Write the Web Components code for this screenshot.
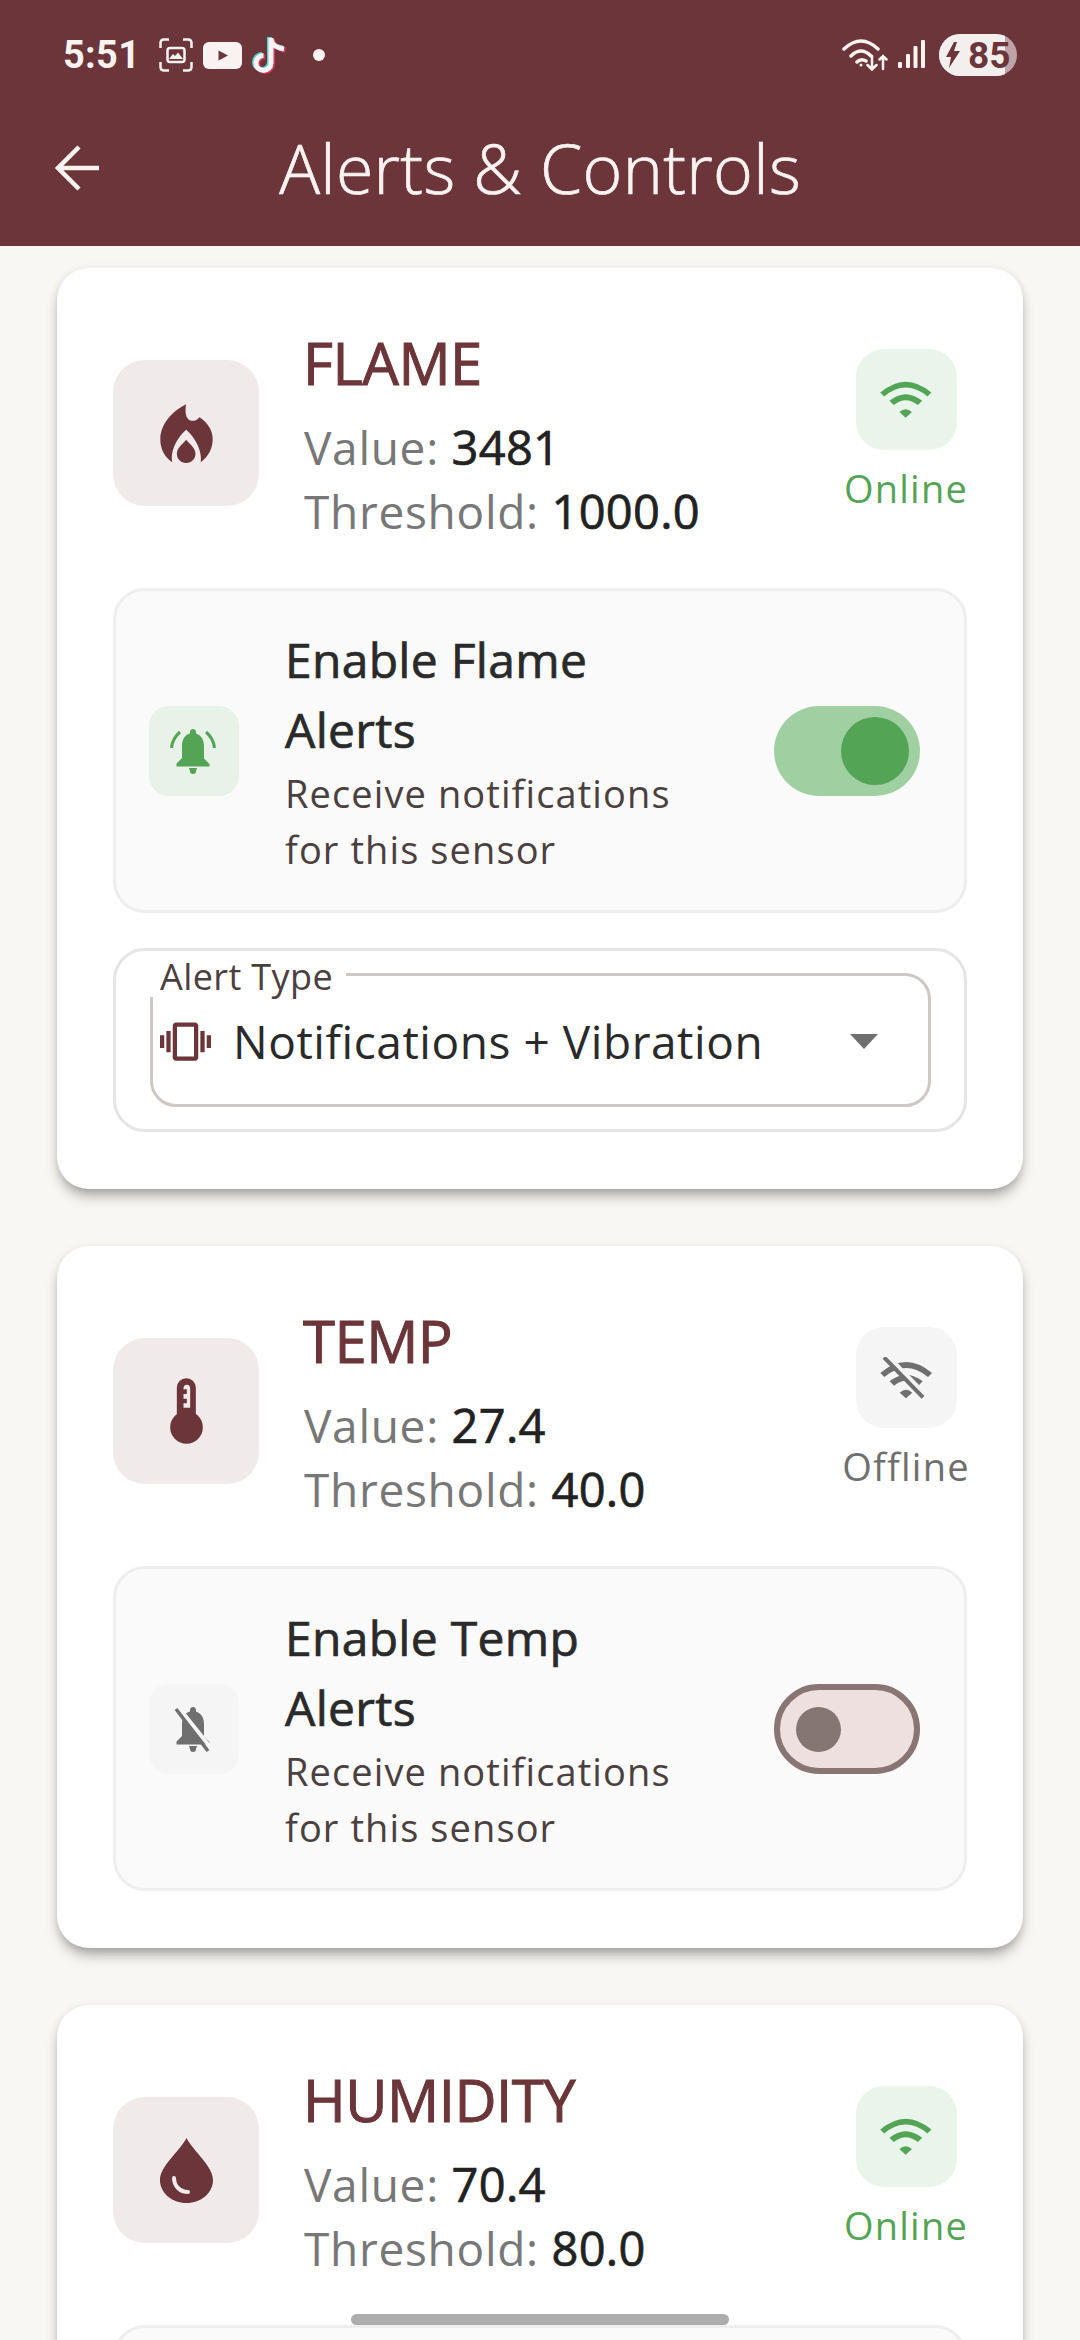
<!DOCTYPE html>
<html>
<head>
<meta charset="utf-8">
<title>Alerts &amp; Controls</title>
<style>
  html, body { margin: 0; padding: 0; background: #F8F7F3; }
  html { height: 2340px; overflow: hidden; }
  body { width: 1080px; height: 2340px; overflow: hidden; position: relative; font-family: "Open Sans", sans-serif; }
  main { display: flex; flex-direction: column; gap: 57px; height: 2094px; box-sizing: border-box; padding: 22px 57px 0; overflow: hidden; }
  sensor-card { flex: none; }
</style>
</head>
<body>
<status-bar></status-bar>
<app-bar title-text="Alerts &amp; Controls"></app-bar>
<main>
  <sensor-card name="FLAME" icon="flame" value="3481" threshold="1000.0" online enabled alert-label="Enable Flame Alerts">
    <alert-select label="Alert Type" value="Notifications + Vibration"></alert-select>
  </sensor-card>
  <sensor-card name="TEMP" icon="temp" value="27.4" threshold="40.0" alert-label="Enable Temp Alerts"></sensor-card>
  <sensor-card name="HUMIDITY" icon="humidity" value="70.4" threshold="80.0" online></sensor-card>
</main>
<home-indicator></home-indicator>

<script>
// Shared icon markup, drawn from measurements of the reference
const WIFI_ARCS = `
  <path d="M300 220Q377 154 455 220L443 232Q377 178 312 232Z"/>
  <path d="M328 245Q377 205 427 245L414 258Q377 228 341 258Z"/>
  <path d="M358 279Q377 262 396 279L377 296Z"/>`;

const BELL = `
  <path d="M24 3c2 0 3 1.5 3 3v1.500c6 2 8 7 8 13v12l5.500 5.500v2.500H7.500V37.500L13 32V20.500c0-6 2-11.500 8-13V6c0-1.500 1-3 3-3Z"/>
  <path d="M20 42h8l-1 3a3 3 0 0 1-6 0Z"/>`;

const ICONS = {
  flame: `<svg width="53" height="59" viewBox="358 452 158 178" fill="#6B3539">
    <path d="M436 453C436 453 430 480 440 495C448 506 466 506 476 492C500 508 516 530 516 558C516 590 500 612 480 628C484 600 470 560 436 530C402 560 388 600 394 628C372 612 358 590 358 558C358 510 400 470 436 453Z"/>
    <path d="M436 560C450 576 464 586 464 602C464 618 452 630 436 630C420 630 408 618 408 602C408 586 422 576 436 560Z"/>
  </svg>`,
  temp: `<svg width="33" height="66" viewBox="208 236 98 198">
    <circle cx="257" cy="384" r="49" fill="#6B3539"/>
    <rect x="228" y="237" width="57" height="170" rx="28" fill="#6B3539"/>
    <path d="M248 268Q248 256 258 256Q268 256 268 268V325H248V312H258V298H248V284H258V270H248Z" fill="#F0EAEB"/>
  </svg>`,
  humidity: `<svg width="53" height="65" viewBox="0 0 53 65">
    <path d="M26.500 0C34 14 53 28 53 42C53 55 41 65 26.500 65C12 65 0 55 0 42C0 28 19 14 26.500 0Z" fill="#6B3539"/>
    <path d="M14 40C14 48 20 54 28 54" fill="none" stroke="#F0EAEB" stroke-width="4" stroke-linecap="round"/>
  </svg>`,
  wifi: `<svg width="52" height="37" viewBox="300 185 156 112" fill="#53A455">${WIFI_ARCS}</svg>`,
  wifiOff: `<svg width="52" height="42" viewBox="296 164 156 126" fill="#6F6F6F">
    <g transform="translate(-3 -8)">${WIFI_ARCS}</g>
    <path d="M316 157L433 277" stroke="#F5F5F5" stroke-width="12"/>
    <path d="M308 165L425 285" stroke="#6F6F6F" stroke-width="12"/>
  </svg>`,
  bell: `<svg width="50" height="50" viewBox="0 0 50 50" fill="#53A455">${BELL}
    <path d="M11 6C5 11 3 17 2.500 22M37 6C43 11 45 17 45.500 22" fill="none" stroke="#53A455" stroke-width="3"/>
  </svg>`,
  bellOff: `<svg width="50" height="50" viewBox="0 0 50 50" fill="#6F6F6F">${BELL}
    <path d="M10 4L42 44" stroke="#F5F5F5" stroke-width="4"/>
    <path d="M7 5L39 47" stroke="#6F6F6F" stroke-width="3.500"/>
  </svg>`,
  vibration: `<svg width="51" height="51" viewBox="0 0 24 24" fill="#6B3539">
    <path d="M0 15h2V9H0v6zm3 2h2V7H3v10zm19-8v6h2V9h-2zm-3 8h2V7h-2v10zM16.500 3h-9C6.670 3 6 3.670 6 4.500v15c0 .830.670 1.500 1.500 1.500h9c.830 0 1.500-.670 1.500-1.500v-15c0-.830-.670-1.500-1.500-1.500zM16 19H8V5h8v14z"/>
  </svg>`
};

class StatusBar extends HTMLElement {
  connectedCallback() {
    const shadow = this.attachShadow({ mode: 'open' });
    shadow.innerHTML = `
      <style>
        :host { display: flex; align-items: center; height: 110px; padding: 0 63px 0 63px; box-sizing: border-box;
                background: #6B3539; color: #F8F3F0; }
        .time { font: 700 38px Roboto, sans-serif; letter-spacing: .3px; margin-right: 19px; }
        .left { display: flex; align-items: center; gap: 10px; }
        .dot { width: 12px; height: 12px; border-radius: 50%; background: #F8F3F0; margin-left: 16px; }
        .right { margin-left: auto; display: flex; align-items: center; gap: 10px; }
        .battery { position: relative; width: 78px; height: 42px; border-radius: 21px; overflow: hidden; background: #BFA3A5;
                   display: flex; align-items: center; gap: 8px; padding-left: 7px; box-sizing: border-box;
                   font: 700 37px Roboto, sans-serif; color: #6B3539; margin-left: 3px; }
        .battery .fill { position: absolute; left: 0; top: 0; bottom: 0; width: 66px; background: #F3EFEF; }
        .battery svg, .battery .pct { position: relative; flex: none; }
      </style>
      <span class="time">5:51</span>
      <div class="left">
        <svg width="34" height="34" viewBox="0 0 34 34" fill="none" stroke="#F8F3F0" stroke-width="2.500">
          <path d="M1.500 10V5Q1.500 1.500 5 1.500H10M24 1.500H29Q32.500 1.500 32.500 5V10M32.500 24V29Q32.500 32.500 29 32.500H24M10 32.500H5Q1.500 32.500 1.500 29V24"/>
          <rect x="8.500" y="10" width="17" height="14" rx="2.500"/>
          <path d="M10 21L14 16L16 18L19 14.500L24 21Z" fill="#F8F3F0" stroke="none"/>
        </svg>
        <svg width="39" height="27" viewBox="0 0 39 27">
          <rect width="39" height="27" rx="6" fill="#F8F3F0"/>
          <path d="M15.500 8.500V18.500L25 13.500Z" fill="#6B3539"/>
        </svg>
        <svg width="35" height="39" viewBox="0 0 35 39" fill="none" stroke-width="5">
          <path d="M19 2V27A7.500 7.500 0 1 1 11.500 19.500M19 3Q20 11 32 13" stroke="#56D0D3" transform="translate(-1.500 -1)"/>
          <path d="M19 2V27A7.500 7.500 0 1 1 11.500 19.500M19 3Q20 11 32 13" stroke="#D6395B" transform="translate(1.500 1)"/>
          <path d="M19 2V27A7.500 7.500 0 1 1 11.500 19.500M19 3Q20 11 32 13" stroke="#F8F3F0"/>
        </svg>
        <span class="dot"></span>
      </div>
      <div class="right">
        <svg width="46" height="34" viewBox="0 0 46 34" fill="none" stroke="#F8F3F0" stroke-width="3.500" stroke-linecap="round">
          <path d="M2 11Q19 -5 36 11M9 18Q19 8 29 18M15 24Q19 20 24 23"/>
          <circle cx="19" cy="27" r="1.500" fill="#F8F3F0" stroke="none"/>
          <path d="M30 18V31M25.500 27L30 31.500L34.500 27M41 31V18M37.500 21.500L41 18L44.500 21.500" stroke-width="2.500"/>
        </svg>
        <svg width="28" height="30" viewBox="0 0 28 30" fill="#F8F3F0">
          <rect x="0" y="22" width="4" height="6" rx="1"/>
          <rect x="8" y="14" width="4" height="14" rx="1"/>
          <rect x="15.500" y="6" width="4" height="22" rx="1"/>
          <rect x="23" y="0" width="4" height="28" rx="1"/>
        </svg>
        <div class="battery">
          <span class="fill"></span>
          <svg width="14" height="26" viewBox="0 0 14 26" fill="#6B3539"><path d="M8 0L0 15H5L3 26L14 9H8L11 0Z"/></svg>
          <span class="pct">85</span>
        </div>
      </div>
    `;
  }
}

class AppBar extends HTMLElement {
  connectedCallback() {
    const shadow = this.attachShadow({ mode: 'open' });
    shadow.innerHTML = `
      <style>
        :host { display: block; height: 136px; background: #6B3539; color: #F8F3F0; }
        .bar { position: relative; display: flex; align-items: center; justify-content: center; height: 114px; }
        svg { position: absolute; left: 55px; top: 35px; }
        h1 { margin: 0; font: 300 68px "Open Sans", sans-serif; letter-spacing: .3px; -webkit-text-stroke: .7px #F8F3F0; }
      </style>
      <div class="bar">
        <svg width="45" height="46" viewBox="0 0 45 46" fill="none" stroke="#F8F3F0" stroke-width="4.500">
          <path d="M44 23H3M24 2L3 23L24 44"/>
        </svg>
        <h1>${this.getAttribute('title-text')}</h1>
      </div>
    `;
  }
}

class AlertRow extends HTMLElement {
  connectedCallback() {
    const on = this.hasAttribute('enabled');
    const label = this.getAttribute('label');
    const shadow = this.attachShadow({ mode: 'open' });
    // a row with no label is the one that starts right at the bottom of the frame
    shadow.innerHTML = `
      <style>
        :host { display: flex; align-items: center; box-sizing: border-box; height: 325px; padding: 0 44px 0 33px;
                background: #FAFAFA; border: 3px solid #EEEEEE; border-radius: 32px; }
        .badge { flex: none; width: 90px; height: 90px; border-radius: 20px; display: flex; align-items: center; justify-content: center;
                 background: ${on ? '#E8F2E8' : '#F5F5F5'}; }
        .text { flex: none; width: 400px; margin-left: 46px; }
        .title { font: 400 48px/70px "Open Sans", sans-serif; color: #2A2A2A; letter-spacing: .3px; -webkit-text-stroke: .7px #2A2A2A; }
        .sub { font: 400 38px/56px "Open Sans", sans-serif; color: #4B4040; letter-spacing: 1.1px; }
        .toggle { flex: none; margin-left: auto; position: relative; box-sizing: border-box; width: 146px; height: 90px; border-radius: 45px;
                  background: ${on ? '#A0CFA2' : '#EFE0E0'}; border: ${on ? '0' : '6px solid #887574'}; }
        .thumb { position: absolute; border-radius: 50%; }
        .thumb.on { right: 11px; top: 11px; width: 68px; height: 68px; background: #53A455; }
        .thumb.off { left: 16px; top: 17px; width: 45px; height: 45px; background: #857573; }
      </style>
      ${label ? `
      <div class="badge">${on ? ICONS.bell : ICONS.bellOff}</div>
      <div class="text">
        <div class="title">${label}</div>
        <div class="sub">Receive notifications for this sensor</div>
      </div>
      <div class="toggle"><span class="thumb ${on ? 'on' : 'off'}"></span></div>` : ''}
    `;
  }
}

class AlertSelect extends HTMLElement {
  connectedCallback() {
    const shadow = this.attachShadow({ mode: 'open' });
    shadow.innerHTML = `
      <style>
        :host { display: block; box-sizing: border-box; height: 184px; margin-top: 35px; padding: 22px 33px 22px 34px;
                background: #fff; border: 3px solid #E5E5E5; border-radius: 32px; }
        .field { position: relative; box-sizing: border-box; height: 134px; display: flex; align-items: center; padding: 2px 50px 0 7px;
                 border: 3px solid #CCC8C4; border-radius: 26px; }
        .label { position: absolute; left: -3px; top: -20px; padding: 0 13px 0 10px; background: #fff;
                 font: 400 36px/41px "Open Sans", sans-serif; color: #4B4040; letter-spacing: .4px; }
        .value { margin-left: 22px; font: 400 46px/60px "Open Sans", sans-serif; color: #2A2A2A; letter-spacing: .55px; white-space: nowrap; }
        .arrow { margin-left: auto; width: 0; height: 0; border: 14px solid transparent; border-top: 15px solid #6F6F6F; border-bottom: 0; }
      </style>
      <div class="field">
        <span class="label">${this.getAttribute('label')}</span>
        ${ICONS.vibration}
        <span class="value">${this.getAttribute('value')}</span>
        <span class="arrow"></span>
      </div>
    `;
  }
}

class SensorCard extends HTMLElement {
  connectedCallback() {
    const online = this.hasAttribute('online');
    const shadow = this.attachShadow({ mode: 'open' });
    shadow.innerHTML = `
      <style>
        :host { display: block; box-sizing: border-box; padding: 56px 56px 57px; background: #fff; border-radius: 32px;
                box-shadow: 0 9px 14px -3px rgba(0,0,0,.35), 0 1px 8px rgba(0,0,0,.08); }
        .head { display: flex; align-items: center; height: 218px; margin-bottom: 46px; }
        .tile { flex: none; width: 146px; height: 146px; border-radius: 32px; background: #F0EAEB;
                display: flex; align-items: center; justify-content: center; }
        .info { margin-left: 45px; }
        .name { font: 400 58px/80px "Open Sans", sans-serif; color: #6B3539; letter-spacing: -.5px; margin: 0 0 12px -1px; -webkit-text-stroke: 1px #6B3539; }
        .line { font: 400 46px/64px "Open Sans", sans-serif; color: #777; letter-spacing: .7px; }
        .line b { font-weight: 400; font-size: 47px; color: #222; letter-spacing: .3px; -webkit-text-stroke: .7px #222; }
        .status { flex: none; margin-left: auto; width: 122px; padding-bottom: 3px; display: flex; flex-direction: column; align-items: center; gap: 12px; }
        .box { width: 101px; height: 101px; border-radius: 28px; display: flex; align-items: center; justify-content: center;
               background: ${online ? '#E9F5EA' : '#F5F5F5'}; }
        .state { font: 400 38px/52px "Open Sans", sans-serif; letter-spacing: 1.2px; color: ${online ? '#53A455' : '#6F6F6F'}; }
      </style>
      <div class="head">
        <div class="tile">${ICONS[this.getAttribute('icon')]}</div>
        <div class="info">
          <div class="name">${this.getAttribute('name')}</div>
          <div class="line">Value: <b>${this.getAttribute('value')}</b></div>
          <div class="line">Threshold: <b>${this.getAttribute('threshold')}</b></div>
        </div>
        <div class="status">
          <div class="box">${online ? ICONS.wifi : ICONS.wifiOff}</div>
          <span class="state">${online ? 'Online' : 'Offline'}</span>
        </div>
      </div>
      <alert-row label="${this.getAttribute('alert-label') || ''}" ${this.hasAttribute('enabled') ? 'enabled' : ''}></alert-row>
      <slot></slot>
    `;
  }
}

class HomeIndicator extends HTMLElement {
  connectedCallback() {
    const shadow = this.attachShadow({ mode: 'open' });
    shadow.innerHTML = `
      <style>
        :host { position: absolute; left: 351px; top: 2314px; width: 378px; height: 11px; border-radius: 6px; background: #ADADAD; }
      </style>
    `;
  }
}

customElements.define('status-bar', StatusBar);
customElements.define('app-bar', AppBar);
customElements.define('alert-row', AlertRow);
customElements.define('alert-select', AlertSelect);
customElements.define('sensor-card', SensorCard);
customElements.define('home-indicator', HomeIndicator);
</script>
</body>
</html>
